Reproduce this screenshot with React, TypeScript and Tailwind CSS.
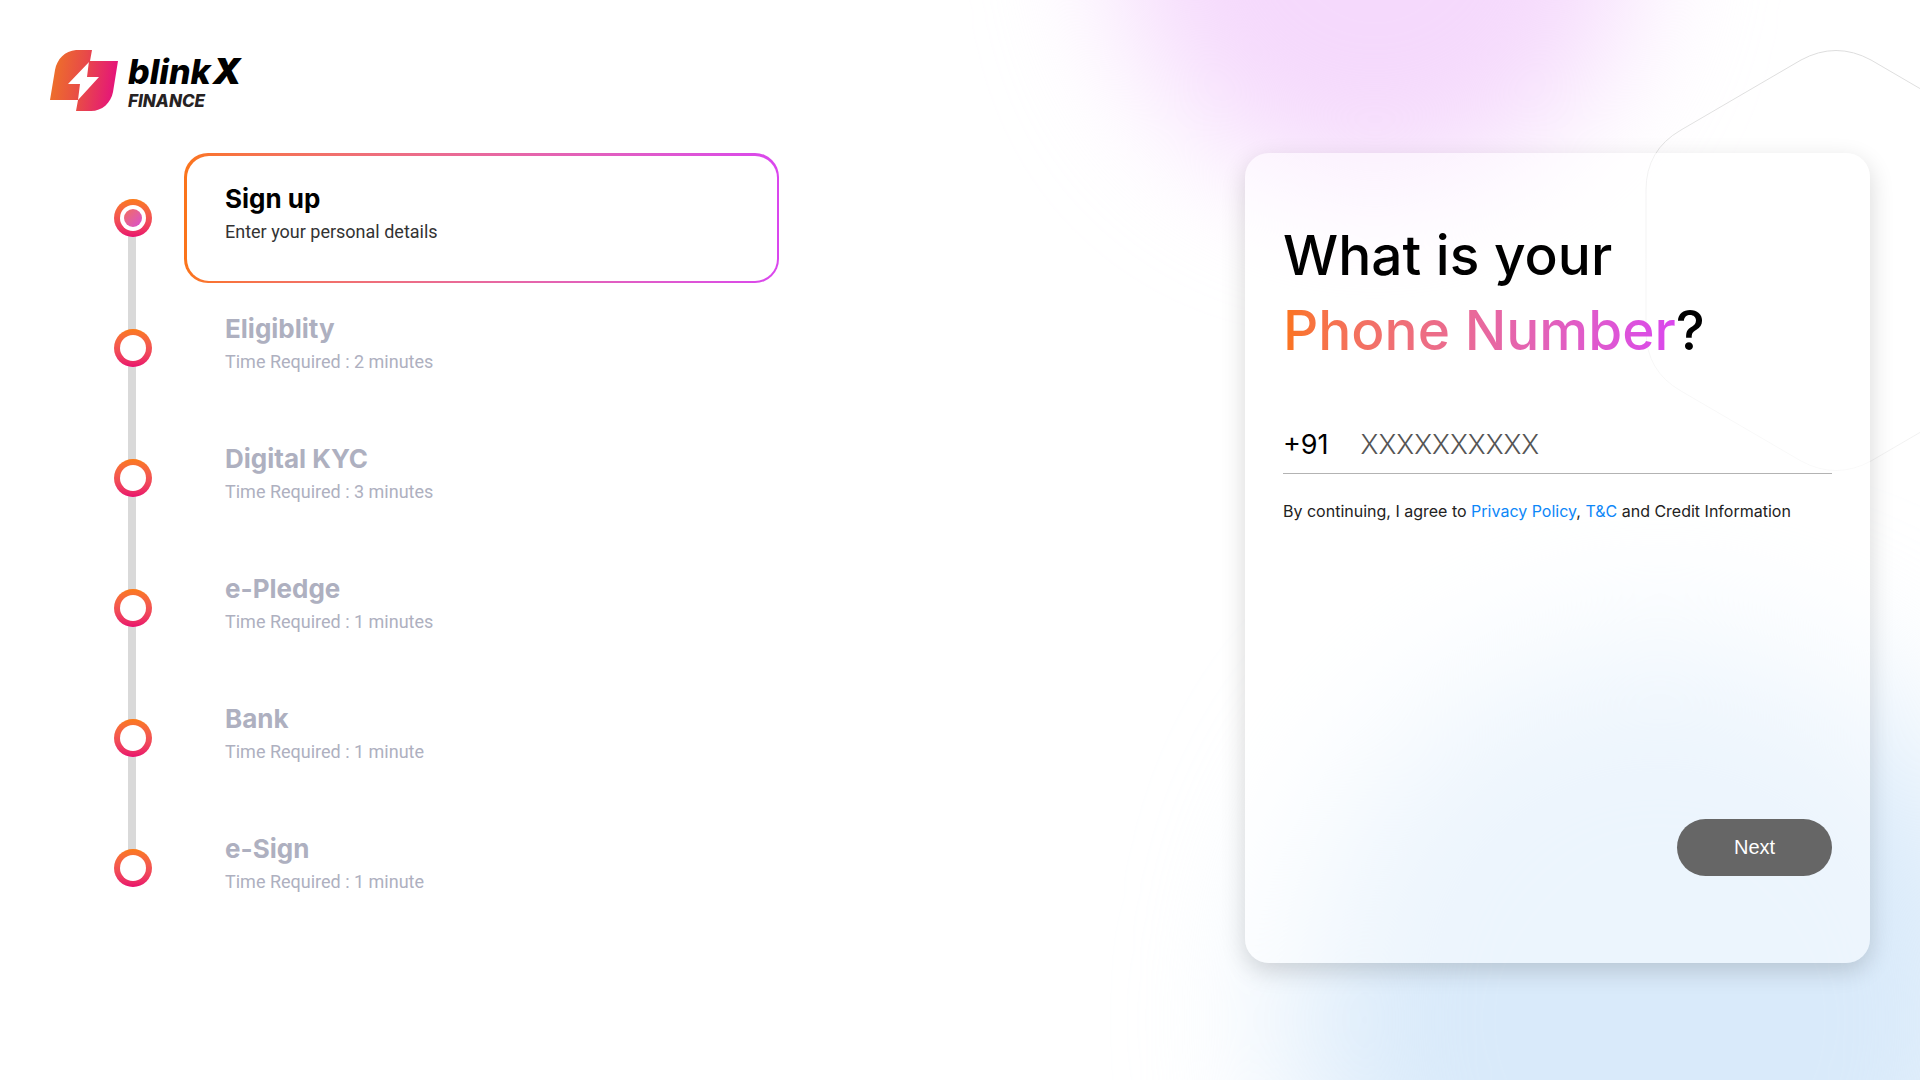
type Step = {
  title: string;
  detail: string;
};

const steps: Step[] = [
  { title: "Sign up", detail: "Enter your personal details" },
  { title: "Eligiblity", detail: "Time Required : 2 minutes" },
  { title: "Digital KYC", detail: "Time Required : 3 minutes" },
  { title: "e-Pledge", detail: "Time Required : 1 minutes" },
  { title: "Bank", detail: "Time Required : 1 minute" },
  { title: "e-Sign", detail: "Time Required : 1 minute" },
];

function Logo() {
  return (
    <a href="/" aria-label="blinkX Finance" className="flex items-start gap-[10px]">
      <svg width="68" height="61" viewBox="0 0 68 61" aria-hidden="true">
        <defs>
          <linearGradient id="logo" gradientUnits="userSpaceOnUse" x1="0" y1="20" x2="66" y2="30">
            <stop offset="0" stopColor="#ee7327" />
            <stop offset="0.5" stopColor="#e84a48" />
            <stop offset="1" stopColor="#e5147a" />
          </linearGradient>
        </defs>
        <path
          fill="url(#logo)"
          d="M26 0H42L40 11L18 34H30L28 50H0L5 20C7 9 15 1 26 0Z"
        />
        <path
          fill="url(#logo)"
          d="M39 11H68L63 42C61 53 52 61 41 61H26L28 50L49 27H37Z"
        />
      </svg>
      <span className="flex flex-col font-['Inter',sans-serif] italic">
        <span className="flex items-baseline gap-0.5 text-[34px] leading-[42px] font-extrabold text-black">
          blink
          <span className="text-4xl leading-[42px] font-black">X</span>
        </span>
        <span className="text-[17px] leading-4 font-extrabold text-[#262223]">
          FINANCE
        </span>
      </span>
    </a>
  );
}

function StepMarker({ active }: { active: boolean }) {
  return (
    <span className="relative flex size-[38px] shrink-0 items-center justify-center rounded-full bg-gradient-to-b from-[#fb7a14] to-[#e90a6c]">
      <span className="flex size-[26px] items-center justify-center rounded-full bg-white">
        {active && (
          <span className="size-[18px] rounded-full bg-gradient-to-br from-[#f26a55] to-[#d94bd0]" />
        )}
      </span>
    </span>
  );
}

function StepRow({ step, active }: { step: Step; active: boolean }) {
  return (
    <li
      className="flex h-[130px] items-center gap-8"
      aria-current={active ? "step" : undefined}
    >
      <StepMarker active={active} />

      <div
        className={
          active
            ? "h-full flex-1 rounded-3xl bg-gradient-to-r from-[#fb7419] to-[#da46ee] pt-[3px] pr-0.5 pb-0.5 pl-[3px]"
            : "h-full flex-1 pt-[3px] pl-[3px]"
        }
      >
        <div
          className={
            active
              ? "h-full rounded-[22px] bg-white px-[38px] pt-[27px] text-black"
              : "h-full px-[38px] pt-[27px] text-[#aeb0c0]"
          }
        >
          <h2 className="font-['Inter',sans-serif] text-[26px] leading-8 font-bold">
            {step.title}
          </h2>
          <p
            className={
              active
                ? "font-['Roboto',sans-serif] text-lg leading-[34px] text-[#333333]"
                : "font-['Roboto',sans-serif] text-lg leading-[34px]"
            }
          >
            {step.detail}
          </p>
        </div>
      </div>
    </li>
  );
}

function Backdrop() {
  return (
    <div className="pointer-events-none absolute inset-0 overflow-hidden" aria-hidden="true">
      <div className="absolute -top-[400px] right-[285px] h-[590px] w-[520px] rounded-full bg-[#f5d9fc] blur-[65px]" />
      <div className="absolute right-[-100px] -bottom-[320px] h-[760px] w-[720px] rounded-full bg-[#d9eafa] blur-[80px]" />
      <svg
        className="absolute top-[49px] right-[-107px]"
        width="382"
        height="424"
        viewBox="1645 49 382 424"
        fill="none"
      >
        <defs>
          <linearGradient id="hexagon" x1="0" y1="0" x2="0" y2="1">
            <stop offset="0" stopColor="#dddddd" />
            <stop offset="1" stopColor="#f3f3f3" />
          </linearGradient>
        </defs>
        <path
          stroke="url(#hexagon)"
          d="M1646 190Q1646 150 1681 130L1801 60Q1836 41 1871 60L1991 130Q2026 150 2026 190V331Q2026 371 1991 391L1871 461Q1836 480 1801 461L1681 391Q1646 371 1646 331Z"
        />
      </svg>
    </div>
  );
}

function PhoneCard() {
  return (
    <form
      className="flex min-h-[75vh] w-[625px] max-w-full shrink-0 flex-col rounded-3xl bg-white/50 px-[38px] pt-[65px] pb-[87px] shadow-[0_8px_24px_rgba(0,0,0,0.16)]"
      onSubmit={(event) => event.preventDefault()}
    >
      <h1 className="font-['Inter',sans-serif] text-[55px] leading-[75px] font-medium text-black">
        What is your
        <br />
        <span className="bg-gradient-to-r from-[#fb7419] to-[#da46ee] bg-clip-text text-transparent">
          Phone Number
        </span>
        ?
      </h1>

      <div className="mt-[50px] flex h-14 items-center gap-8 border-b border-[#b3b3b3] font-['Inter',sans-serif] text-[27px]">
        <label htmlFor="phone" className="text-black">
          +91
        </label>
        <input
          id="phone"
          type="tel"
          maxLength={10}
          placeholder="XXXXXXXXXX"
          className="min-w-0 flex-1 bg-transparent font-light outline-none placeholder:text-[#555555]"
        />
      </div>

      <p className="mt-[25px] font-['Inter',sans-serif] text-base leading-6 text-[#222222]">
        By continuing, I agree to{" "}
        <a href="#privacy" className="text-[#0d87f8]">
          Privacy Policy
        </a>
        ,{" "}
        <a href="#terms" className="text-[#0d87f8]">
          T&amp;C
        </a>{" "}
        and Credit Information
      </p>

      <button
        type="submit"
        className="mt-auto h-[57px] w-[155px] self-end rounded-full bg-[#666666] pb-0.5 font-['Liberation_Sans',sans-serif] text-xl text-white"
      >
        Next
      </button>
    </form>
  );
}

export default function App() {
  return (
    <div className="relative min-h-screen bg-white">
      <Backdrop />

      <header className="relative h-[153px] px-[50px] pt-[50px]">
        <Logo />
      </header>

      <main className="relative flex flex-wrap items-start justify-between gap-8 pr-[50px] pl-[114px]">
        <ol className="relative w-full max-w-[665px]">
          <li
            className="absolute top-[65px] bottom-[65px] left-[14px] w-2 bg-[#d9d9d9]"
            role="presentation"
          />
          {steps.map((step, index) => (
            <StepRow key={step.title} step={step} active={index === 0} />
          ))}
        </ol>

        <PhoneCard />
      </main>
    </div>
  );
}
